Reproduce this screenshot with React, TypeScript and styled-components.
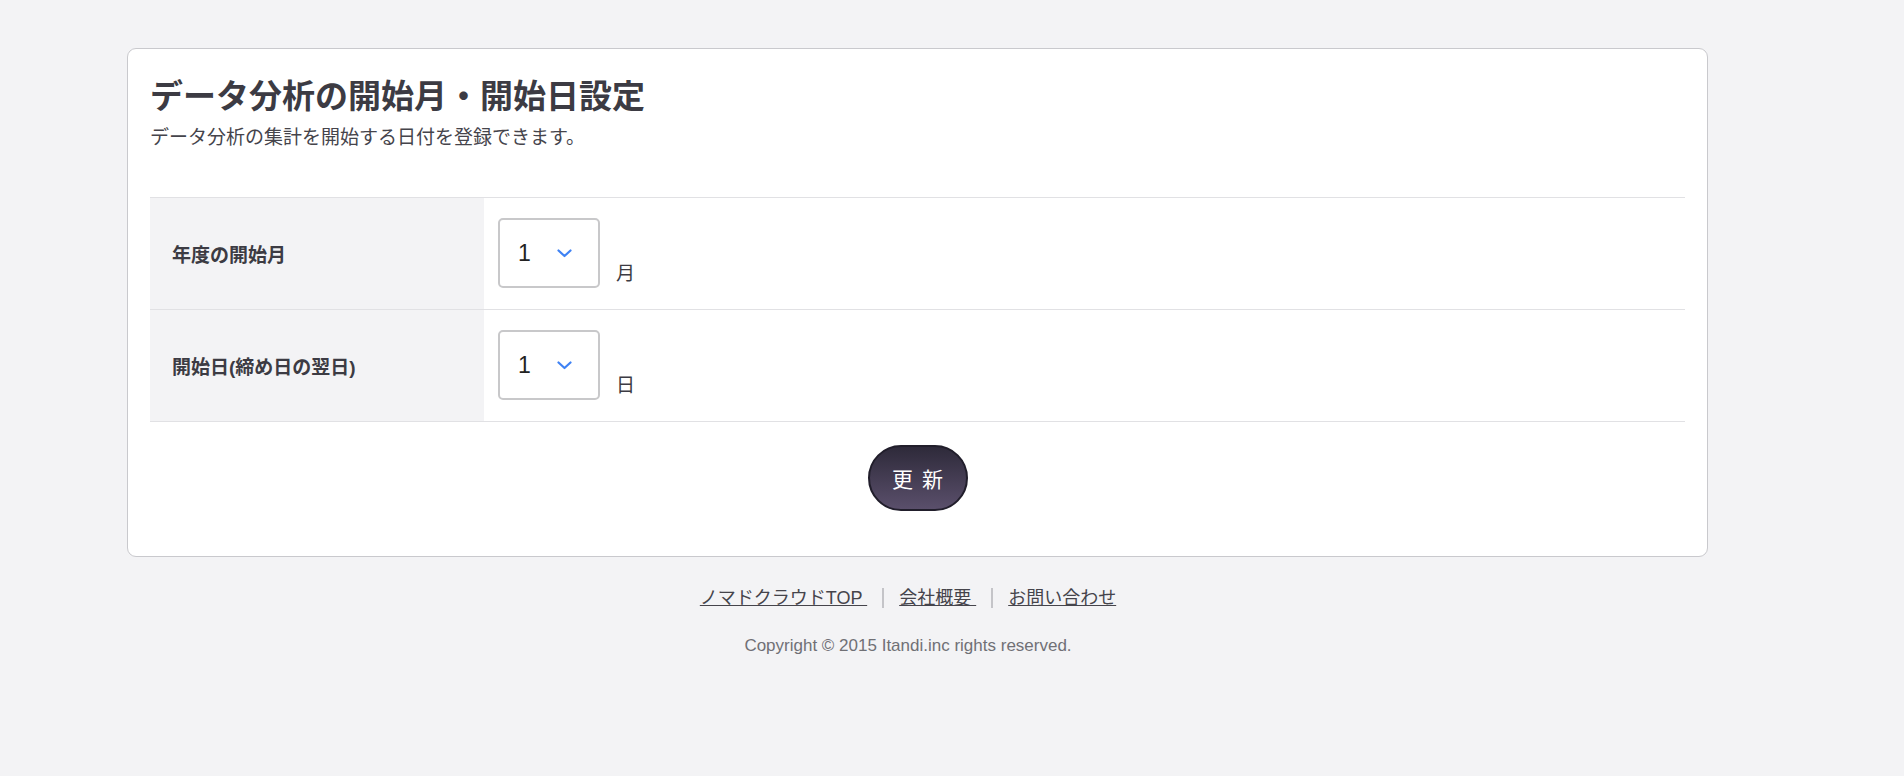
import React from "react";
import styled, { createGlobalStyle } from "styled-components";

const GlobalStyle = createGlobalStyle`
  html, body {
    margin: 0;
    padding: 0;
    background: #f3f3f5;
  }
  body {
    font-family: "Liberation Sans", "Noto Sans CJK JP", sans-serif;
    color: #3c3b43;
  }
`;

const Wrapper = styled.div`
  width: 1581px;
  margin-left: 127px;
  padding-top: 48px;
`;

const Card = styled.section`
  background: #ffffff;
  border: 1px solid #c9c9cd;
  border-radius: 9px;
  padding: 28px 22px 45px;
`;

const Title = styled.h1`
  margin: 0;
  font-size: 33px;
  line-height: 40px;
  font-weight: 700;
  color: #3c3b43;
`;

const Lead = styled.p`
  margin: 8px 0 0;
  font-size: 19px;
  line-height: 26px;
  color: #45444b;
`;

const Table = styled.div`
  margin-top: 46px;
  border-top: 1px solid #e1e1e4;
`;

const Row = styled.div`
  display: grid;
  grid-template-columns: 334px 1fr;
  border-bottom: 1px solid #e1e1e4;
`;

const Label = styled.div`
  background: #f3f3f5;
  display: flex;
  align-items: center;
  padding-left: 22px;
  font-size: 19px;
  font-weight: 700;
  color: #3c3b43;
`;

const Value = styled.div`
  display: flex;
  align-items: flex-end;
  gap: 16px;
  padding: 20px 0 21px 14px;
`;

const SelectBox = styled.div`
  box-sizing: border-box;
  width: 102px;
  height: 70px;
  border: 2px solid #c8c8ca;
  border-radius: 5px;
  background: #fff;
  display: flex;
  align-items: center;
  padding-left: 18px;
  gap: 26px;
  font-size: 23px;
  color: #222;
`;

const Unit = styled.span`
  font-size: 19px;
  line-height: 26px;
  padding-bottom: 1px;
  color: #3c3b43;
`;

const Actions = styled.div`
  display: flex;
  justify-content: center;
  margin-top: 23px;
`;

const SubmitButton = styled.button`
  width: 100px;
  height: 66px;
  border-radius: 33px;
  border: 2px solid #211e2b;
  background: linear-gradient(#2e2a3a, #5a4f6b);
  color: #ffffff;
  font-family: "Liberation Sans", "Noto Sans CJK JP", sans-serif;
  font-size: 21px;
  word-spacing: 3px;
  cursor: pointer;
`;

const Footer = styled.footer`
  padding-right: 19px;
  text-align: center;
  margin-top: 28px;
`;

const Links = styled.nav`
  display: flex;
  justify-content: center;
  align-items: center;
  gap: 15px;
  font-size: 18px;
  line-height: 26px;
`;

const FooterLink = styled.a`
  color: #45444b;
  text-decoration: underline;
  white-space: pre;
`;

const Divider = styled.span`
  width: 2px;
  height: 20px;
  background: #c4c4c8;
`;

const Copyright = styled.p`
  margin: 23px 0 0;
  font-size: 17px;
  line-height: 24px;
  color: #707075;
`;

function Chevron() {
  return (
    <svg width="15" height="9" viewBox="0 0 15 9" fill="none">
      <path d="M1.5 1.5 L7.5 7 L13.5 1.5" stroke="#3f82f4" strokeWidth="2.2" strokeLinecap="round" strokeLinejoin="round" />
    </svg>
  );
}

const settings = [
  { label: "年度の開始月", value: "1", unit: "月" },
  { label: "開始日(締め日の翌日)", value: "1", unit: "日" },
];

const footerLinks = ["ノマドクラウドTOP ", "会社概要 ", "お問い合わせ"];

export default function App() {
  return (
    <>
      <GlobalStyle />
      <Wrapper>
        <Card>
          <Title>データ分析の開始月・開始日設定</Title>
          <Lead>データ分析の集計を開始する日付を登録できます。</Lead>
          <Table>
            {settings.map((s) => (
              <Row key={s.label}>
                <Label>{s.label}</Label>
                <Value>
                  <SelectBox>
                    <span>{s.value}</span>
                    <Chevron />
                  </SelectBox>
                  <Unit>{s.unit}</Unit>
                </Value>
              </Row>
            ))}
          </Table>
          <Actions>
            <SubmitButton type="button">更 新</SubmitButton>
          </Actions>
        </Card>
        <Footer>
          <Links>
            {footerLinks.map((l, i) => (
              <React.Fragment key={l}>
                {i > 0 && <Divider />}
                <FooterLink href="#">{l}</FooterLink>
              </React.Fragment>
            ))}
          </Links>
          <Copyright>Copyright © 2015 Itandi.inc rights reserved.</Copyright>
        </Footer>
      </Wrapper>
    </>
  );
}
